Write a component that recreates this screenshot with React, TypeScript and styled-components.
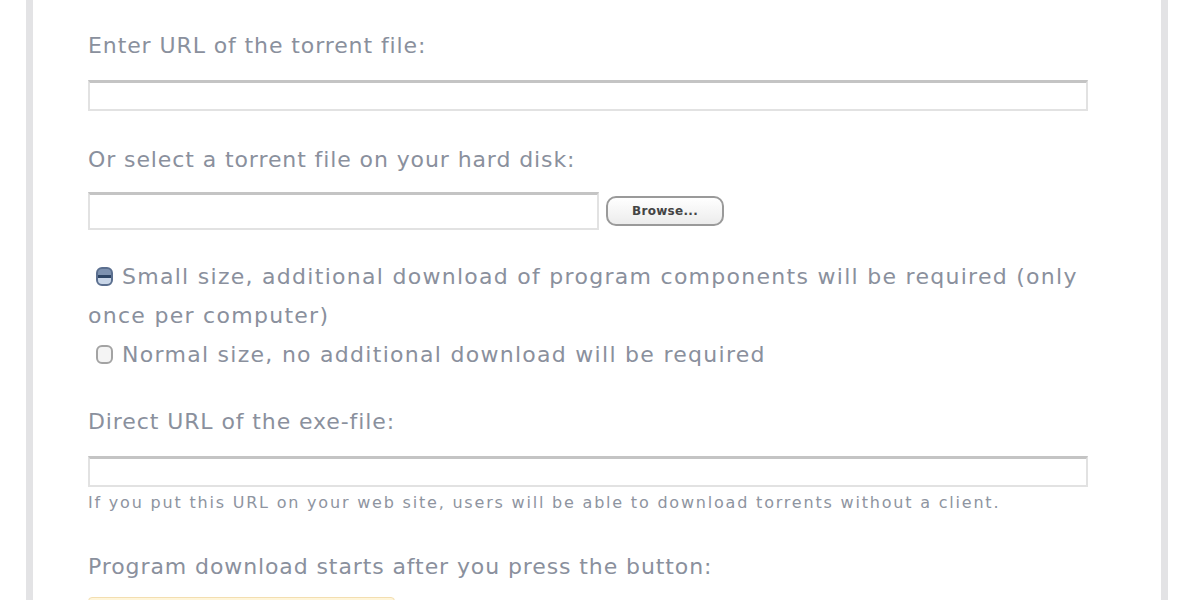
import styled, { createGlobalStyle } from 'styled-components';

const GlobalStyle = createGlobalStyle`
  html, body {
    margin: 0;
    padding: 0;
    background: #ffffff;
    overflow: hidden;
  }
`;

const Page = styled.div`
  width: 1200px;
  height: 600px;
  overflow: hidden;
  padding-left: 26px;
  box-sizing: border-box;
`;

const Panel = styled.div`
  width: 1142px;
  height: 660px;
  box-sizing: border-box;
  border-left: 7px solid #e3e3e5;
  border-right: 7px solid #e3e3e5;
  padding: 30px 0 0 55px;
  font-family: 'DejaVu Sans', Verdana, sans-serif;
  color: #8a909d;
`;

const Label = styled.div`
  font-size: 22px;
  line-height: 32px;
  letter-spacing: 0.9px;
`;

const Field = styled.div<{ $width: number; $height: number }>`
  width: ${({ $width }) => $width}px;
  height: ${({ $height }) => $height}px;
  box-sizing: border-box;
  border: 2px solid #e2e2e2;
  border-top: 3px solid #c4c4c4;
  background: #fff;
`;

const Group = styled.div<{ $gap: number; $mt: number }>`
  display: flex;
  flex-direction: column;
  gap: ${({ $gap }) => $gap}px;
  margin-top: ${({ $mt }) => $mt}px;
`;

const FileRow = styled.div`
  display: flex;
  align-items: center;
  gap: 7px;
`;

const BrowseButton = styled.div`
  width: 118px;
  height: 30px;
  box-sizing: border-box;
  border: 2px solid #9a9a9a;
  border-radius: 10px;
  background: linear-gradient(#ffffff, #ececec);
  display: flex;
  align-items: center;
  justify-content: center;
  font-size: 12px;
  font-weight: bold;
  color: #444;
  letter-spacing: 0.3px;
`;

const Options = styled.div`
  margin-top: 27px;
  font-size: 22px;
  line-height: 39px;
  letter-spacing: 1.28px;
`;

const Radio = styled.span<{ $checked: boolean }>`
  display: inline-block;
  width: 17px;
  height: 19px;
  margin: 0 9px 0 8px;
  vertical-align: -2px;
  box-sizing: border-box;
  border: 2px solid ${({ $checked }) => ($checked ? '#5b6f8f' : '#a3a3a3')};
  border-radius: 6px;
  background: ${({ $checked }) =>
    $checked ? 'linear-gradient(#7e92b0 40%, #2f4666 40%, #2f4666 60%, #c9d6e8 60%)' : '#f4f4f4'};
`;

const Note = styled.div`
  font-size: 16px;
  line-height: 20px;
  letter-spacing: 1.8px;
  color: #8e94a0;
  margin-top: 6px;
`;

const GoButton = styled.div`
  width: 305px;
  height: 40px;
  border-radius: 4px;
  background: linear-gradient(#fff6dc, #f6d98a);
  border: 1px solid #f3deb0;
`;

export default function App() {
  return (
    <>
      <GlobalStyle />
      <Page>
        <Panel>
          <Group $gap={18} $mt={0}>
            <Label>Enter URL of the torrent file:</Label>
            <Field $width={1000} $height={31} />
          </Group>
          <Group $gap={16} $mt={33}>
            <Label>Or select a torrent file on your hard disk:</Label>
            <FileRow>
              <Field $width={511} $height={38} />
              <BrowseButton>Browse...</BrowseButton>
            </FileRow>
          </Group>
          <Options>
            <div>
              <Radio $checked />
              Small size, additional download of program components will be required (only
              <br />
              once per computer)
            </div>
            <div>
              <Radio $checked={false} />
              Normal size, no additional download will be required
            </div>
          </Options>
          <Group $gap={18} $mt={32}>
            <Label>Direct URL of the exe-file:</Label>
            <div>
              <Field $width={1000} $height={31} />
              <Note>If you put this URL on your web site, users will be able to download torrents without a client.</Note>
            </div>
          </Group>
          <Group $gap={14} $mt={38}>
            <Label>Program download starts after you press the button:</Label>
            <GoButton />
          </Group>
        </Panel>
      </Page>
    </>
  );
}
